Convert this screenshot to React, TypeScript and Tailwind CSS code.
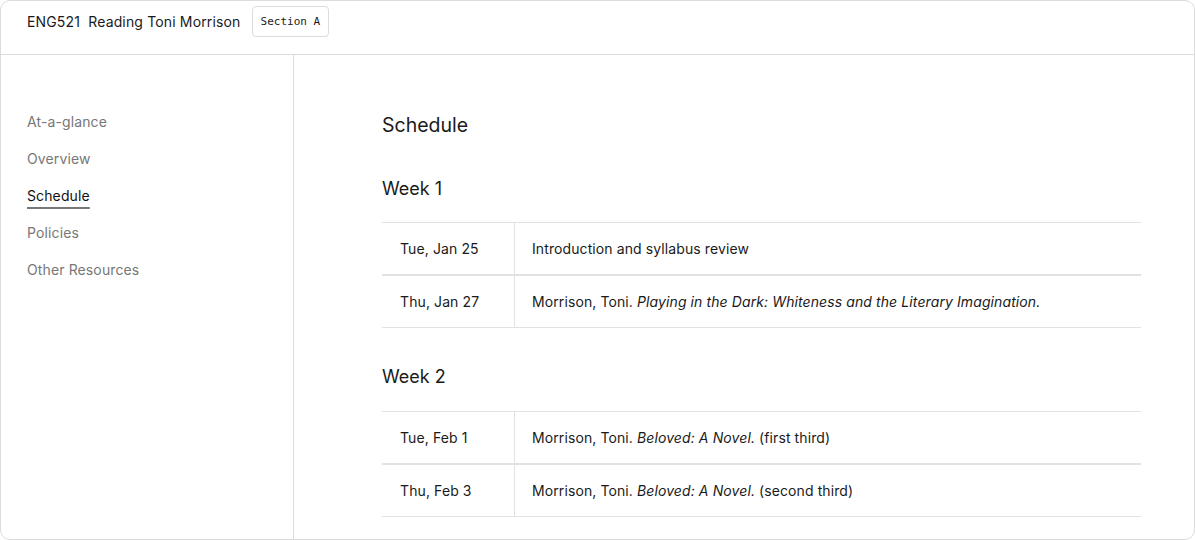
const nav = ["At-a-glance", "Overview", "Schedule", "Policies", "Other Resources"];

type Row = { date: string; pre: string; title?: string; post?: string };

const weeks: { name: string; rows: Row[] }[] = [
  {
    name: "Week 1",
    rows: [
      { date: "Tue, Jan 25", pre: "Introduction and syllabus review" },
      {
        date: "Thu, Jan 27",
        pre: "Morrison, Toni. ",
        title: "Playing in the Dark: Whiteness and the Literary Imagination.",
      },
    ],
  },
  {
    name: "Week 2",
    rows: [
      { date: "Tue, Feb 1", pre: "Morrison, Toni. ", title: "Beloved: A Novel.", post: " (first third)" },
      { date: "Thu, Feb 3", pre: "Morrison, Toni. ", title: "Beloved: A Novel.", post: " (second third)" },
    ],
  },
];

export default function App() {
  return (
    <div className="h-[540px] w-[1195px] bg-white font-['Inter',sans-serif] text-[#1a1a1a]">
      <div className="flex h-full flex-col overflow-hidden rounded-[10px] border border-[#dcdcdc]">
        <header className="flex h-[54px] shrink-0 items-center gap-[11px] border-b border-[#dcdcdc] pl-[26px] pb-[12px]">
          <span className="text-[14px] tracking-[0.15px]">ENG521&nbsp; Reading Toni Morrison</span>
          <span className="rounded-[4px] border border-[#dcdcdc] px-[8px] py-[6px] font-['DejaVu_Sans_Mono',monospace] text-[11px] leading-[17px]">
            Section A
          </span>
        </header>
        <div className="flex min-h-0 flex-1">
          <aside className="w-[293px] shrink-0 border-r border-[#dcdcdc] pl-[26px] pt-[56px]">
            <ul className="flex flex-col gap-[16px] text-[14px] leading-[21px] tracking-[0.12px]">
              {nav.map((n) => (
                <li key={n}>
                  <span
                    className={
                      n === "Schedule"
                        ? "text-[#111] underline decoration-[#777] decoration-2 underline-offset-[6px]"
                        : "text-[#777]"
                    }
                  >
                    {n}
                  </span>
                </li>
              ))}
            </ul>
          </aside>
          <main className="flex-1 pl-[88px] pr-[53px] pt-[56px]">
            <h1 className="text-[19.5px] leading-[28px]">Schedule</h1>
            {weeks.map((w, i) => (
              <section key={w.name} className={i === 0 ? "mt-[38px]" : "mt-[37px]"}>
                <h2 className="text-[18px] leading-[24px]">{w.name}</h2>
                <div className={i === 0 ? "mt-[21px]" : "mt-[22px]"}>
                  {w.rows.map((r) => (
                    <div key={r.date} className="flex h-[53px] border-y border-[#e2e2e2] text-[14px] tracking-[0.1px]">
                      <div className="flex w-[133px] shrink-0 items-center border-r border-[#e2e2e2] pl-[18px]">
                        {r.date}
                      </div>
                      <div className="flex items-center pl-[17px]">
                        <span>
                          {r.pre}
                          {r.title && <em>{r.title}</em>}
                          {r.post}
                        </span>
                      </div>
                    </div>
                  ))}
                </div>
              </section>
            ))}
          </main>
        </div>
      </div>
    </div>
  );
}
